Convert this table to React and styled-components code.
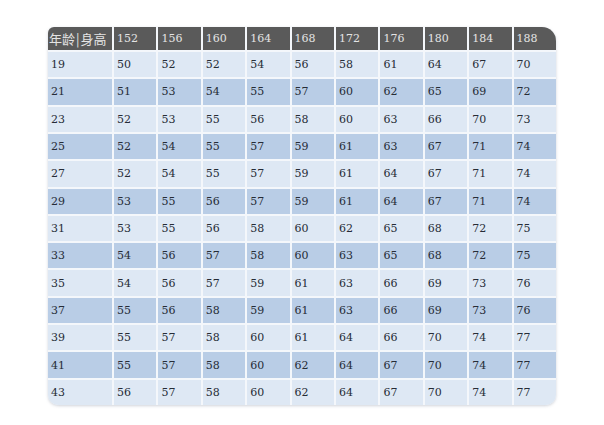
import React from "react";
import styled, { createGlobalStyle } from "styled-components";

const Global = createGlobalStyle`
  html, body { margin: 0; padding: 0; background: #ffffff; }
  #root { width: 604px; height: 425px; }
`;

const Page = styled.div`
  width: 604px;
  height: 425px;
  box-sizing: border-box;
  padding: 27px 0 0 48px;
  background: #ffffff;
`;

const Table = styled.div`
  width: 508px;
  height: 378px;
  display: grid;
  grid-template-columns: 64px repeat(10, 1fr);
  grid-template-rows: 23px repeat(13, 1fr);
  column-gap: 2px;
  row-gap: 2px;
  background: #f4f7fb;
  border-radius: 6px 14px 10px 10px;
  overflow: hidden;
  box-shadow: 0 1px 3px rgba(120, 130, 150, 0.35);
`;

const HeadCell = styled.div`
  background: #5a5a5a;
  color: #e4e4e4;
  font-family: ${(p) => (p.$cjk ? '"Noto Sans CJK SC", "DejaVu Sans", sans-serif' : '"DejaVu Serif", serif')};
  font-size: ${(p) => (p.$cjk ? "13px" : "11px")};
  display: flex;
  align-items: center;
  padding-left: ${(p) => (p.$cjk ? "1px" : "3px")};
  white-space: nowrap;
  overflow: hidden;
`;

const Bar = styled.span`
  margin: 0 1px;
`;

const Cell = styled.div`
  background: ${(p) => (p.$dark ? "#b9cde6" : "#dee8f4")};
  color: #262c36;
  font-family: "DejaVu Serif", serif;
  font-size: 11px;
  display: flex;
  align-items: center;
  padding-left: 3px;
`;

const heights = [152, 156, 160, 164, 168, 172, 176, 180, 184, 188];
const rows = [
  [19, 50, 52, 52, 54, 56, 58, 61, 64, 67, 70],
  [21, 51, 53, 54, 55, 57, 60, 62, 65, 69, 72],
  [23, 52, 53, 55, 56, 58, 60, 63, 66, 70, 73],
  [25, 52, 54, 55, 57, 59, 61, 63, 67, 71, 74],
  [27, 52, 54, 55, 57, 59, 61, 64, 67, 71, 74],
  [29, 53, 55, 56, 57, 59, 61, 64, 67, 71, 74],
  [31, 53, 55, 56, 58, 60, 62, 65, 68, 72, 75],
  [33, 54, 56, 57, 58, 60, 63, 65, 68, 72, 75],
  [35, 54, 56, 57, 59, 61, 63, 66, 69, 73, 76],
  [37, 55, 56, 58, 59, 61, 63, 66, 69, 73, 76],
  [39, 55, 57, 58, 60, 61, 64, 66, 70, 74, 77],
  [41, 55, 57, 58, 60, 62, 64, 67, 70, 74, 77],
  [43, 56, 57, 58, 60, 62, 64, 67, 70, 74, 77],
];

export default function App() {
  return (
    <>
      <Global />
      <Page>
        <Table>
          <HeadCell $cjk>
            年龄<Bar>|</Bar>身高
          </HeadCell>
          {heights.map((h) => (
            <HeadCell key={h}>{h}</HeadCell>
          ))}
          {rows.map((r, i) =>
            r.map((v, j) => (
              <Cell key={`${i}-${j}`} $dark={i % 2 === 1}>
                {v}
              </Cell>
            ))
          )}
        </Table>
      </Page>
    </>
  );
}
